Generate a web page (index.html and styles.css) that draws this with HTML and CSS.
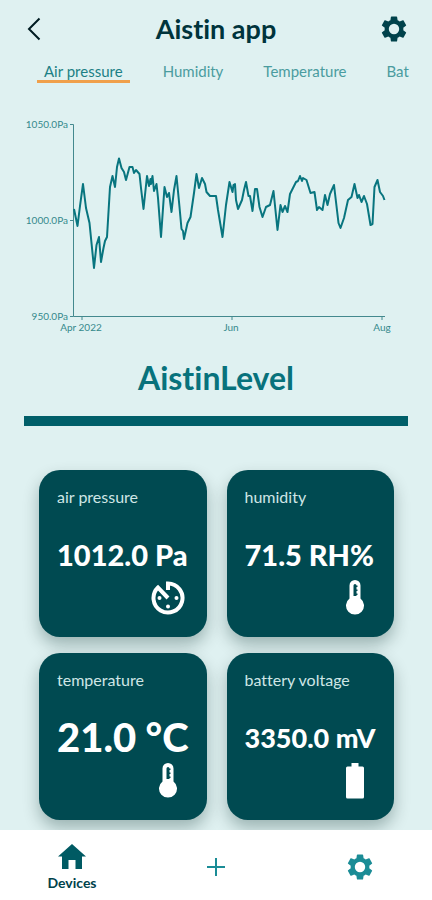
FILE: index.html
```html
<!DOCTYPE html>
<html lang="en">
<head>
    <meta charset="UTF-8">
    <meta name="viewport" content="width=device-width, initial-scale=1.0">
    <title>Aistin app</title>
    <link rel="stylesheet" href="styles.css">
</head>
<body>
    <svg class="hidden">
        <symbol id="gear" viewBox="2 2 20 20">
            <path fill-rule="evenodd" d="M19.14 12.94c.04-.3.06-.61.06-.94 0-.32-.02-.64-.07-.94l2.03-1.58c.18-.14.23-.41.12-.61l-1.92-3.32c-.12-.22-.37-.29-.59-.22l-2.39.96c-.5-.38-1.03-.7-1.62-.94l-.36-2.54c-.04-.24-.24-.41-.48-.41h-3.84c-.24 0-.43.17-.47.41l-.36 2.54c-.59.24-1.13.57-1.62.94l-2.39-.96c-.22-.08-.47 0-.59.22L2.74 8.87c-.12.21-.08.47.12.61l2.03 1.58c-.05.3-.09.63-.09.94s.02.64.07.94l-2.03 1.58c-.18.14-.23.41-.12.61l1.92 3.32c.12.22.37.29.59.22l2.39-.96c.5.38 1.03.7 1.62.94l.36 2.54c.05.24.24.41.48.41h3.84c.24 0 .44-.17.47-.41l.36-2.54c.59-.24 1.13-.56 1.62-.94l2.39.96c.22.08.47 0 .59-.22l1.92-3.32c.12-.22.07-.47-.12-.61l-2.01-1.58zM12 16a4 4 0 1 1 0-8 4 4 0 0 1 0 8z"/>
        </symbol>
        <symbol id="thermometer" viewBox="0 0 36 36">
            <path fill-rule="evenodd" d="M18 0a5.500 5.500 0 0 0-5.500 5.500V18.500a9 9 0 1 0 11 0V5.500A5.500 5.500 0 0 0 18 0zM16.500 5.500a1.500 1.500 0 0 1 3 0h1v1.500h-1v2.500h1V11h-1v2.500h1V15h-1v1h-3z"/>
        </symbol>
    </svg>

    <header class="header">
        <button class="icon-button" aria-label="Back">
            <svg class="back-icon" viewBox="0 0 14 24"><path d="M12.500 1.500L2 12l10.500 10.500"/></svg>
        </button>
        <h1>Aistin app</h1>
        <button class="icon-button" aria-label="Settings">
            <svg class="gear-icon"><use href="#gear"/></svg>
        </button>
    </header>

    <nav class="tabs">
        <a href="#pressure" class="active">Air pressure</a>
        <a href="#humidity">Humidity</a>
        <a href="#temperature">Temperature</a>
        <a href="#battery">Bat</a>
    </nav>

    <main>
        <svg class="chart" viewBox="0 0 384 230" role="img" aria-label="Air pressure from April to August 2022">
            <path class="axis" d="M46 14.500h3.500V206.500H361M46 110.500h3.500M46 206.500h3.500M58 206v4M208 206v4M358 206v4"/>
            <g class="y-labels">
                <text x="44" y="18">1050.0Pa</text>
                <text x="44" y="114">1000.0Pa</text>
                <text x="44" y="210">950.0Pa</text>
            </g>
            <g class="x-labels">
                <text x="57" y="221">Apr 2022</text>
                <text x="207" y="221">Jun</text>
                <text x="358" y="221">Aug</text>
            </g>
            <polyline class="line" points="50,99 53.500,116 56,96 59,74 62,98 65.500,113 70,158 72.500,135 75,127 77,152 79.500,138 81,131 83,127 86,77 88.500,66 91,77 93,57 95,48.500 97.500,58 100,62 102,70 105.500,57 108.500,57 110,63 112,60 115.500,64 117,78 119.500,99 123,66 125,76 126.500,69 127,74 128.500,66 130,81 132.500,74 134,88 137,127 140.500,77 143,87 145,83 147.500,102 150,80 152.500,66 155.500,97 157.500,119 159,121 160,129 163.500,113 166.500,107 170,83 172.500,64 175,78 178,68 181,74 182.500,82 186,86 192,86 194,100 198.500,127 202,95 205.500,72 208.500,82 209.500,75 211,74 212,90 214,99 218,90 220,80 222,72 224.500,86 226,86 228.500,101 231,79 233,79 235.500,97 238.500,107 242,97 246,95 249.500,81 253.500,120 256.500,95 258.500,102 261,96 263.500,102 266,84 272,72 274,71 276,66 278,71 279,68 282.500,70 286.500,83 290.500,82 293,100 295,97 298.500,100 301,85 303.500,95 306,84 310,75 314.500,113 316.500,118 320,108 324,90 327.500,87 330.500,74 333.500,88 335,85 337.500,92 340,86 343,94 346.500,115 348.500,114 350.500,77 353.500,70 356,82 359,86 360.500,90"/>
        </svg>

        <h2>AistinLevel</h2>

        <div class="cards">
            <section class="card">
                <h3>air pressure</h3>
                <p class="value">1012.0 Pa</p>
                <svg class="card-icon" viewBox="0 0 36 36">
                    <path class="gauge-stroke" d="M18 10V3.500A14.500 14.500 0 1 1 8 7.500L18 18"/>
                    <circle cx="9.500" cy="18" r="2"/>
                    <circle cx="26.500" cy="18" r="2"/>
                    <circle cx="18" cy="26.500" r="2"/>
                </svg>
            </section>
            <section class="card">
                <h3>humidity</h3>
                <p class="value">71.5 RH%</p>
                <svg class="card-icon"><use href="#thermometer"/></svg>
            </section>
            <section class="card">
                <h3>temperature</h3>
                <p class="value large">21.0 °C</p>
                <svg class="card-icon"><use href="#thermometer"/></svg>
            </section>
            <section class="card">
                <h3>battery voltage</h3>
                <p class="value small">3350.0 mV</p>
                <svg class="card-icon" viewBox="0 0 36 36">
                    <path d="M14.500 0h7v3.500h4a1.500 1.500 0 0 1 1.500 1.500v29a1.500 1.500 0 0 1-1.500 1.500h-15A1.500 1.500 0 0 1 9 34V5a1.500 1.500 0 0 1 1.500-1.500h4z"/>
                </svg>
            </section>
        </div>
    </main>

    <nav class="bottom-nav">
        <a href="#devices" class="active">
            <svg class="home-icon" viewBox="0 0 28 25"><path d="M14 0l14 12.500h-4V25h-6.500v-9h-7v9H4V12.500H0z"/></svg>
            Devices
        </a>
        <a href="#add" aria-label="Add device">
            <svg class="plus-icon" viewBox="0 0 18 18"><path d="M9 0v18M0 9h18"/></svg>
        </a>
        <a href="#settings" aria-label="Settings">
            <svg class="gear-icon"><use href="#gear"/></svg>
        </a>
    </nav>
</body>
</html>
```
FILE: styles.css
```css
* {
    box-sizing: border-box;
}
body {
    font-family: Lato, sans-serif;
    font-variant-ligatures: none;
    margin: 0;
    display: flex;
    flex-direction: column;
    min-height: 100vh;
    background-color: #dff1f1;
    color: #00343c;
}
h1, h2, h3, p {
    margin: 0;
}
.hidden {
    display: none;
}
.header {
    display: flex;
    align-items: center;
    justify-content: space-between;
    height: 58px;
    padding: 0 24px;
}
h1 {
    font-size: 27px;
    line-height: 32px;
}
.icon-button {
    display: flex;
    align-items: center;
    justify-content: center;
    width: 28px;
    height: 28px;
    padding: 0;
    border: none;
    background: none;
    color: #00424b;
    cursor: pointer;
}
.back-icon {
    width: 14px;
    height: 24px;
    margin-right: 8px;
    fill: none;
    stroke: #001c22;
    stroke-width: 2;
}
.gear-icon {
    width: 26px;
    height: 26px;
    fill: currentColor;
}
.tabs {
    display: flex;
    gap: 26px;
    margin: 0 16px 0 37px;
    overflow: hidden;
}
.tabs a {
    padding: 5px 7px 1px;
    border-bottom: 3px solid transparent;
    font-size: 15px;
    line-height: 16px;
    white-space: nowrap;
    color: #4a9c9f;
    text-decoration: none;
}
.tabs a.active {
    color: #1b8085;
    border-bottom-color: #f0a04b;
}
main {
    flex: 1;
    padding: 27px 24px 10px;
}
.chart {
    display: block;
    width: 100%;
}
.chart text {
    font-size: 10px;
    fill: #35898c;
}
.y-labels {
    text-anchor: end;
}
.x-labels {
    text-anchor: middle;
}
.axis {
    fill: none;
    stroke: #43898e;
}
.line {
    fill: none;
    stroke: #08757f;
    stroke-width: 2;
    stroke-linejoin: round;
}
h2 {
    margin-top: 20px;
    padding-bottom: 20px;
    border-bottom: 10px solid #005f69;
    font-size: 32px;
    line-height: 36px;
    text-align: center;
    color: #08727c;
}
.cards {
    display: grid;
    grid-template-columns: repeat(2, minmax(0, 1fr));
    gap: 16px 20px;
    margin-top: 44px;
    padding: 0 14px 0 15px;
}
.card {
    display: flex;
    flex-direction: column;
    min-height: 167px;
    padding: 18px;
    border-radius: 21px;
    background-color: #004a51;
    color: white;
    box-shadow: 0 8px 16px rgba(0, 40, 35, 0.3);
}
.card h3 {
    font-size: 16px;
    line-height: 18px;
    font-weight: normal;
    color: #cfe6e6;
}
.value {
    display: flex;
    align-items: center;
    height: 44px;
    margin-top: 26px;
    font-size: 29px;
    font-weight: 900;
    white-space: nowrap;
}
.value.large {
    font-size: 40px;
}
.value.small {
    font-size: 27px;
}
.card-icon {
    align-self: flex-end;
    width: 36px;
    height: 36px;
    margin: 4px 3px 0 0;
    fill: white;
}
.gauge-stroke {
    fill: none;
    stroke: white;
    stroke-width: 4;
}
.bottom-nav {
    position: sticky;
    bottom: 0;
    display: grid;
    grid-template-columns: repeat(3, 1fr);
    height: 70px;
    background-color: white;
}
.bottom-nav a {
    display: flex;
    flex-direction: column;
    align-items: center;
    justify-content: center;
    gap: 6px;
    padding-top: 4px;
    font-size: 14px;
    line-height: 16px;
    font-weight: bold;
    color: #1a8c96;
    text-decoration: none;
}
.bottom-nav a.active {
    color: #00424b;
}
.home-icon {
    width: 28px;
    height: 25px;
    fill: #005a63;
}
.plus-icon {
    width: 18px;
    height: 18px;
    stroke: currentColor;
    stroke-width: 2;
}
```
